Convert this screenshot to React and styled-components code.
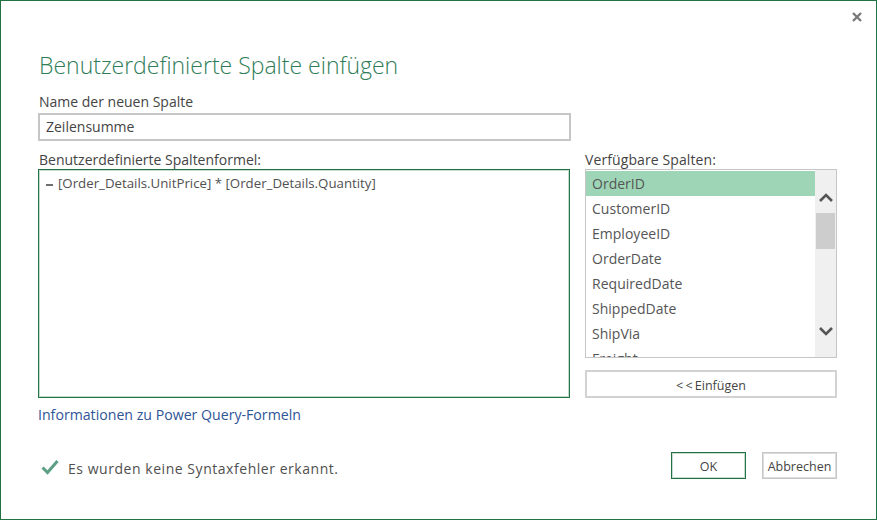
import styled, { createGlobalStyle } from "styled-components";

const GlobalStyle = createGlobalStyle`
  html, body {
    margin: 0;
    padding: 0;
    background: #fff;
  }
`;

const Dialog = styled.div`
  position: relative;
  box-sizing: border-box;
  width: 877px;
  height: 520px;
  padding: 49px 39px 0 37px;
  border: 1px solid #217346;
  background: #fff;
  color: #505050;
  font-family: "Open Sans", "Noto Sans", sans-serif;
  font-size: 14px;
`;
const CloseButton = styled.svg`
  position: absolute;
  top: 11px;
  right: 14px;
  width: 10px;
  height: 10px;
`;
const Title = styled.h1`
  margin: 0 0 0 1px;
  height: 30px;
  font-size: 23px;
  line-height: 30px;
  font-weight: 300;
  color: #2f7d58;
`;
const Label = styled.div`
  margin-left: ${(props) => (props.$flush ? 0 : 1)}px;
  height: 19px;
  line-height: 19px;
  font-size: 14px;
  letter-spacing: ${(props) => (props.$flush ? 0.1 : 0)}px;
  color: #444;
`;
const NameLabel = styled(Label)`
  margin-top: 12px;
  margin-bottom: 2px;
`;
const NameInput = styled.div`
  box-sizing: border-box;
  width: 533px;
  height: 28px;
  padding-left: 6px;
  border: 2px solid #c6c6c6;
  line-height: 24px;
  font-size: 14px;
  color: #444;
`;
const Columns = styled.div`
  display: flex;
  gap: 15px;
  margin-top: 9px;
`;
const LeftColumn = styled.div`
  width: 532px;
`;
const RightColumn = styled.div`
  width: 252px;
`;
const FormulaBox = styled.div`
  box-sizing: border-box;
  display: flex;
  gap: 5px;
  height: 229px;
  padding: 5px 7px;
  border: 1px solid #217346;
  box-shadow: inset 0 0 0 1px rgba(33, 115, 70, 0.25);
  font-size: 13.28px;
  line-height: 17px;
  color: #505050;
`;
const FormulaMark = styled.span`
  display: block;
  width: 7px;
  height: 2px;
  margin-top: 9px;
  background: #6e6e6e;
`;
const HelpLink = styled.a`
  display: block;
  margin-top: 7px;
  font-size: 14.15px;
  line-height: 19px;
  color: #2f5597;
`;
const ColumnList = styled.div`
  box-sizing: border-box;
  display: flex;
  height: 189px;
  padding-top: 1px;
  border: 1px solid #c6c6c6;
  overflow: hidden;
`;
const Items = styled.div`
  flex: 1;
  overflow: hidden;
`;
const Item = styled.div`
  box-sizing: border-box;
  height: 25px;
  padding-left: 6px;
  line-height: 25px;
  font-size: 14px;
  letter-spacing: 0.02px;
  color: #555;
  background: ${(props) => (props.$selected ? "#9fd5b7" : "transparent")};
`;
const ScrollBar = styled.div`
  display: flex;
  flex-direction: column;
  align-items: center;
  width: 21px;
  margin-top: -1px;
  background: #f0f0f0;
`;
const ScrollArrow = styled.svg`
  width: 16px;
  height: 11px;
  margin-top: ${(props) => props.$top}px;
`;
const ScrollThumb = styled.div`
  width: 19px;
  height: 36px;
  margin-top: 10px;
  background: #cdcdcd;
`;
const InsertButton = styled.div`
  box-sizing: border-box;
  height: 28px;
  margin-top: 12px;
  border: 2px solid #d2d2d2;
  text-align: center;
  font-size: 12.5px;
  word-spacing: -1px;
  line-height: 27px;
  color: #444;
`;
const Footer = styled.div`
  display: flex;
  align-items: center;
  margin-top: 28px;
  margin-left: 3px;
`;
const CheckIcon = styled.svg`
  width: 18px;
  height: 16px;
  margin-top: 2px;
  margin-right: 9px;
`;
const Status = styled.div`
  flex: 1;
  padding-top: 6px;
  font-size: 14px;
  letter-spacing: 0.54px;
  color: #505050;
`;
const DialogButton = styled.div`
  box-sizing: border-box;
  width: 75px;
  height: 27px;
  margin-left: ${(props) => props.$gap || 0}px;
  border: 1px solid ${(props) => (props.$primary ? "#217346" : "#c6c6c6")};
  box-shadow: inset 0 0 0 1px
    ${(props) => (props.$primary ? "rgba(33, 115, 70, 0.25)" : "#dcdcdc")};
  text-align: center;
  font-size: 12.5px;
  line-height: 27px;
  color: #444;
`;

const COLUMNS = [
  "OrderID",
  "CustomerID",
  "EmployeeID",
  "OrderDate",
  "RequiredDate",
  "ShippedDate",
  "ShipVia",
  "Freight",
];

const App = () => {
  return (
    <Dialog>
      <GlobalStyle />
      <CloseButton viewBox="0 0 10 10">
        <path d="M1 1L9 9M9 1L1 9" stroke="#7a7a7a" strokeWidth="2.4" fill="none" />
      </CloseButton>
      <Title>Benutzerdefinierte Spalte einfügen</Title>
      <NameLabel>Name der neuen Spalte</NameLabel>
      <NameInput>Zeilensumme</NameInput>
      <Columns>
        <LeftColumn>
          <Label>Benutzerdefinierte Spaltenformel:</Label>
          <FormulaBox>
            <FormulaMark />
            <span>[Order_Details.UnitPrice] * [Order_Details.Quantity]</span>
          </FormulaBox>
          <HelpLink>Informationen zu Power Query-Formeln</HelpLink>
        </LeftColumn>
        <RightColumn>
          <Label $flush>Verfügbare Spalten:</Label>
          <ColumnList>
            <Items>
              {COLUMNS.map((name, index) => (
                <Item key={name} $selected={index === 0}>
                  {name}
                </Item>
              ))}
            </Items>
            <ScrollBar>
              <ScrollArrow viewBox="0 0 16 11" $top={22}>
                <path d="M2 9L8 3L14 9" stroke="#555" strokeWidth="2.6" fill="none" />
              </ScrollArrow>
              <ScrollThumb />
              <ScrollArrow viewBox="0 0 16 11" $top={77}>
                <path d="M2 2L8 8L14 2" stroke="#555" strokeWidth="2.6" fill="none" />
              </ScrollArrow>
            </ScrollBar>
          </ColumnList>
          <InsertButton>&lt; &lt; Einfügen</InsertButton>
        </RightColumn>
      </Columns>
      <Footer>
        <CheckIcon viewBox="0 0 18 16">
          <path d="M1.5 8.5L6.5 13.5L16.5 2" stroke="#5c9f84" strokeWidth="3" fill="none" />
        </CheckIcon>
        <Status>Es wurden keine Syntaxfehler erkannt.</Status>
        <DialogButton $primary>OK</DialogButton>
        <DialogButton $gap={16}>Abbrechen</DialogButton>
      </Footer>
    </Dialog>
  );
};

export default App;
